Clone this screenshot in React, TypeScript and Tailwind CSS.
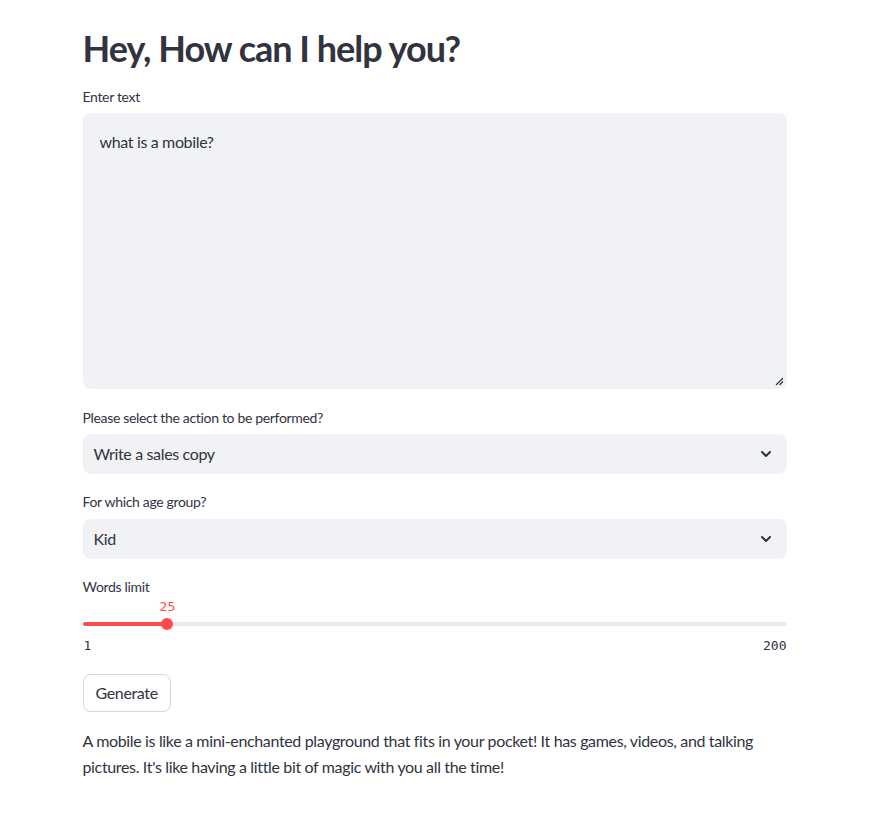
import React from "react";

const Chevron = () => (
  <svg width="16" height="16" viewBox="0 0 24 24" fill="none" stroke="#31333f" strokeWidth="3" strokeLinecap="round" strokeLinejoin="round">
    <path d="M6 9l6 6 6-6" />
  </svg>
);

function Select({ value }: { value: string }) {
  return (
    <div className="flex h-[40px] items-center justify-between rounded-lg bg-[#f0f2f6] pl-[11px] pr-[13px] text-[16px] tracking-[-0.35px] text-[#31333f]">
      <span>{value}</span>
      <Chevron />
    </div>
  );
}

export default function App() {
  const pct = ((25 - 1) / (200 - 1)) * 100;
  return (
    <div className="min-h-[832px] bg-white text-[#31333f]" style={{ fontFamily: '"Lato", "Noto Sans", sans-serif' }}>
      <div className="mx-auto w-[704px] pt-[24px]">
        <h1 className="text-[36px] font-bold leading-[48px] tracking-[-1px] text-[#31333f]">Hey, How can I help you?</h1>
        <div className="mt-[15px] text-[14px] leading-[20px] tracking-[-0.33px]">Enter text</div>
        <div className="relative mt-[6px] h-[276px] rounded-lg bg-[#f0f2f6] px-[17px] py-[17px] text-[16px] leading-[24px] tracking-[-0.35px]">
          what is a mobile?
          <svg className="absolute bottom-[3px] right-[3px]" width="10" height="10" viewBox="0 0 10 10">
            <path d="M2 9L9 2M5.5 9L9 5.5" stroke="#31333f" strokeWidth="1.2" />
          </svg>
        </div>
        <div className="mt-[19px] text-[14px] leading-[20px] tracking-[-0.33px]">Please select the action to be performed?</div>
        <div className="mt-[6px]"><Select value="Write a sales copy" /></div>
        <div className="mt-[18px] text-[14px] leading-[20px] tracking-[-0.33px]">For which age group?</div>
        <div className="mt-[7px]"><Select value="Kid" /></div>
        <div className="mt-[18px] text-[14px] leading-[20px] tracking-[-0.33px]">Words limit</div>
        <div className="relative mt-[2px] h-[38px]">
          <div className="absolute top-[0px] -translate-x-1/2 text-[13px] leading-[16px] text-[#ff4b4b]" style={{ left: `${pct}%`, fontFamily: '"DejaVu Sans Mono", monospace' }}>25</div>
          <div className="absolute left-0 right-0 top-[23px] h-[4px] rounded-full bg-[#e6eaf1]" />
          <div className="absolute left-0 top-[23px] h-[4px] rounded-full bg-[#ff4b4b]" style={{ width: `${pct}%` }} />
          <div className="absolute top-[19px] h-[12px] w-[12px] -translate-x-1/2 rounded-full bg-[#ff4b4b]" style={{ left: `${pct}%` }} />
        </div>
        <div className="flex justify-between text-[13px] leading-[18px] text-[#31333f]" style={{ fontFamily: '"DejaVu Sans Mono", monospace' }}>
          <span className="pl-[1px]">1</span>
          <span>200</span>
        </div>
        <button className="mt-[19px] h-[38px] rounded-lg border border-[#d6d6d9] bg-white px-[12px] text-[16px] tracking-[-0.35px] text-[#31333f]">Generate</button>
        <p className="mt-[16px] text-[16px] leading-[26px] tracking-[-0.35px]">
          A mobile is like a mini-enchanted playground that fits in your pocket! It has games, videos, and talking pictures. It's like having a little bit of magic with you all the time!
        </p>
      </div>
    </div>
  );
}
